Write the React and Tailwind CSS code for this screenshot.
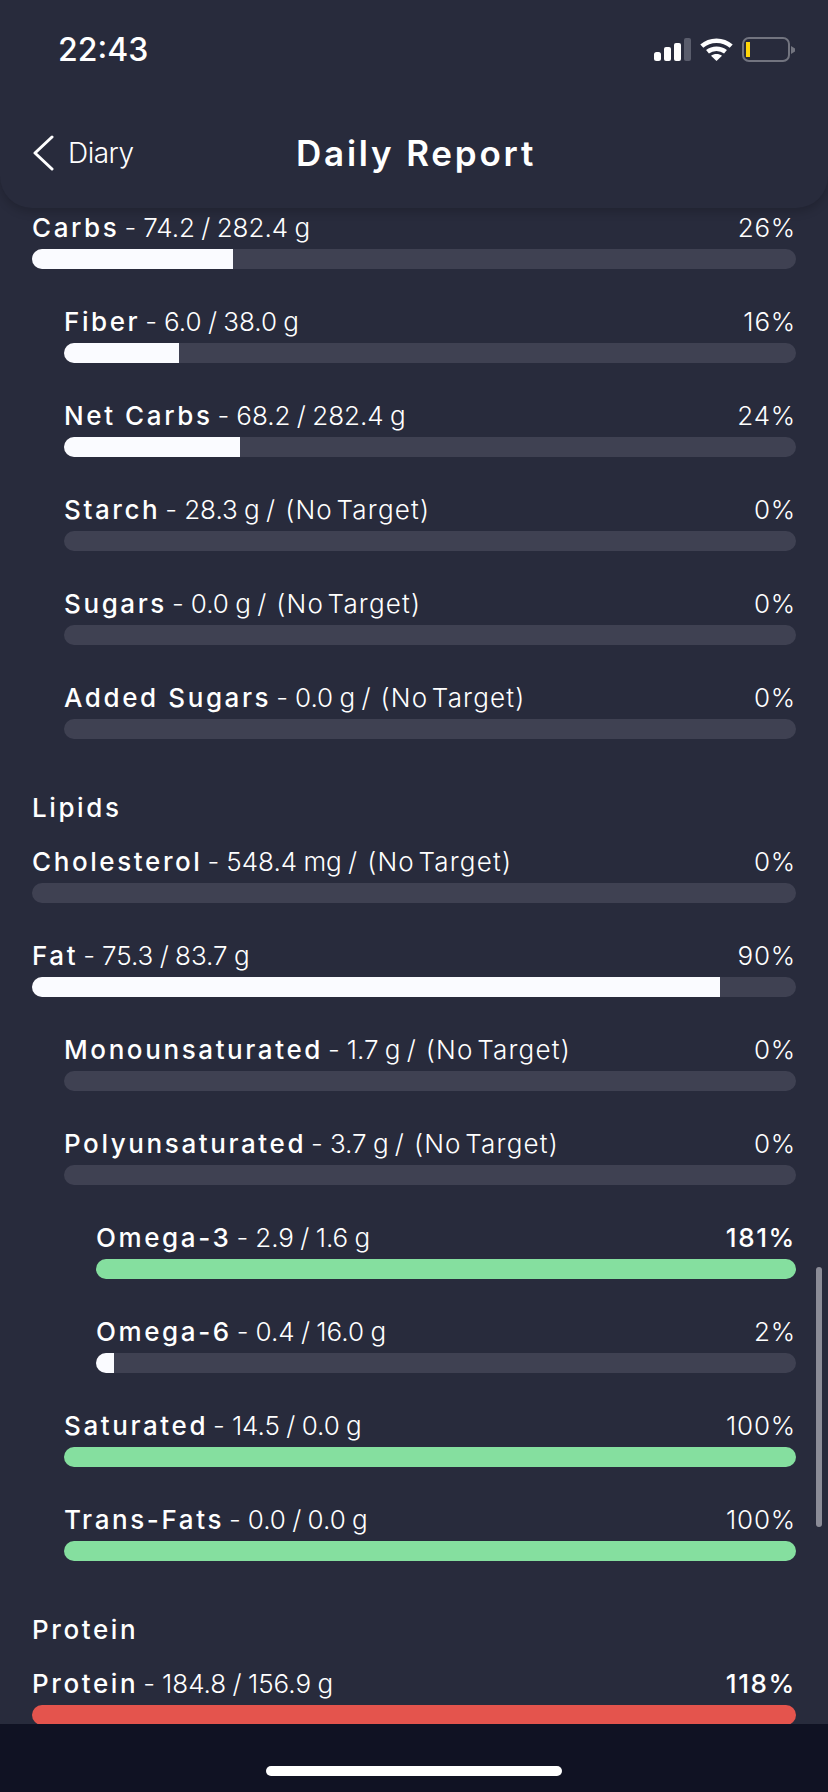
const FONT = "font-['Inter','Liberation_Sans',sans-serif]";

function StatusBar() {
  return (
    <div className="flex h-[88px] items-start justify-between pl-[58px] pr-[33px] pt-[30px]">
      <span className="text-[32px] leading-[40px] font-medium text-white">22:43</span>
      <div className="flex items-center gap-[9px] pt-[7px]">
        <svg width="37" height="23" viewBox="0 0 37 23">
          <rect x="0" y="14" width="7" height="9" rx="2.5" fill="#fff" />
          <rect x="10" y="9" width="7" height="14" rx="2" fill="#fff" />
          <rect x="20" y="5" width="7" height="18" rx="2" fill="#fff" />
          <rect x="30" y="0" width="7" height="23" rx="2" fill="#5a5d6c" />
        </svg>
        <svg width="33" height="23" viewBox="0 0 33 23" fill="none" stroke="#fff" strokeWidth="4.5">
          <path d="M1.8 8.2C10 0.8 23 0.8 31.2 8.2" />
          <path d="M7.5 13.8C12.6 9.6 20.4 9.6 25.5 13.8" />
          <path d="M16.5 23l-5.5-5.2c3-2.4 8-2.4 11 0z" fill="#fff" stroke="none" />
        </svg>
        <svg width="53" height="25" viewBox="0 0 53 25" fill="none">
          <rect x="1" y="1" width="46" height="23" rx="6" stroke="#72747f" strokeWidth="2" />
          <rect x="4" y="5" width="4" height="15" fill="#ffd60a" />
          <path d="M49 9l4 2.5v3L49 17z" fill="#72747f" />
        </svg>
      </div>
    </div>
  );
}

function Header() {
  return (
    <div className="relative z-10 h-[208px] shrink-0 rounded-b-[32px] bg-[#282b3c] shadow-[0_4px_10px_rgba(0,0,0,0.18)]">
      <StatusBar />
      <div className="grid h-[120px] grid-cols-[1fr_auto_1fr] items-center pt-[10px]">
        <div className="flex items-center gap-[12px] pl-[32px]">
          <svg width="24" height="36" viewBox="0 0 24 36" fill="none" stroke="#fff" strokeWidth="3" strokeLinecap="round" strokeLinejoin="round">
            <path d="M20 2L3 18l17 16" />
          </svg>
          <span className="text-[28px] leading-[36px] font-light tracking-[-0.5px] text-white">Diary</span>
        </div>
        <h1 className="ml-[4px] text-[35px] leading-[44px] font-semibold tracking-[2.8px] text-white">Daily Report</h1>
        <div />
      </div>
    </div>
  );
}

function Row({ name, detail, noTarget = false, pct, fill = 0, color = "bg-[#fafbff]", level = 0, bold = false }) {
  const pad = level === 0 ? "pl-[32px]" : level === 1 ? "pl-[64px]" : "pl-[96px]";
  return (
    <div className={`h-[94px] pr-[32px] ${pad}`}>
      <div className="mb-[2px] flex h-[39px] items-center justify-between text-[26px] leading-[32px] text-white">
        <div className="whitespace-nowrap">
          <span className="font-medium tracking-[2.6px]">{name}</span>
          <span className="ml-[5px] mr-[7px] font-light">-</span>
          <span className="font-light [word-spacing:-1px]">{detail}</span>
          {noTarget && (
            <span className="ml-[10px] font-light tracking-[1.2px] [word-spacing:-5px]">(No Target)</span>
          )}
        </div>
        <span className={bold ? "font-medium tracking-[1.6px]" : "font-light tracking-[0.8px]"}>{pct}</span>
      </div>
      <div className="h-[20px] overflow-hidden rounded-[10px] bg-[#3f4152]">
        <div className={`h-full ${color}`} style={{ width: `${fill}%` }} />
      </div>
    </div>
  );
}

function Heading({ children }) {
  return (
    <div className="mt-[20px] mb-[18px] pl-[32px] text-[26px] leading-[32px] font-medium tracking-[2.6px] text-white">
      {children}
    </div>
  );
}

export default function App() {
  return (
    <div className={`relative flex h-[1792px] w-[828px] flex-col overflow-hidden bg-[#282b3c] ${FONT}`}>
      <Header />
      <div className="relative min-h-0 flex-1 overflow-hidden">
        <Row name="Carbs" detail="74.2 / 282.4 g" pct="26%" fill={26.3} />
        <Row level={1} name="Fiber" detail="6.0 / 38.0 g" pct="16%" fill={15.7} />
        <Row level={1} name="Net Carbs" detail="68.2 / 282.4 g" pct="24%" fill={24} />
        <Row level={1} name="Starch" detail="28.3 g /" noTarget pct="0%" />
        <Row level={1} name="Sugars" detail="0.0 g /" noTarget pct="0%" />
        <Row level={1} name="Added Sugars" detail="0.0 g /" noTarget pct="0%" />
        <Heading>Lipids</Heading>
        <Row name="Cholesterol" detail="548.4 mg /" noTarget pct="0%" />
        <Row name="Fat" detail="75.3 / 83.7 g" pct="90%" fill={90} />
        <Row level={1} name="Monounsaturated" detail="1.7 g /" noTarget pct="0%" />
        <Row level={1} name="Polyunsaturated" detail="3.7 g /" noTarget pct="0%" />
        <Row level={2} name="Omega-3" detail="2.9 / 1.6 g" pct="181%" fill={100} color="bg-[#85df9f]" bold />
        <Row level={2} name="Omega-6" detail="0.4 / 16.0 g" pct="2%" fill={2.5} />
        <Row level={1} name="Saturated" detail="14.5 / 0.0 g" pct="100%" fill={100} color="bg-[#85df9f]" />
        <Row level={1} name="Trans-Fats" detail="0.0 / 0.0 g" pct="100%" fill={100} color="bg-[#85df9f]" />
        <Heading>Protein</Heading>
        <Row name="Protein" detail="184.8 / 156.9 g" pct="118%" fill={100} color="bg-[#e4544d]" bold />
        <div className="absolute right-[6px] top-[1059px] h-[260px] w-[6px] rounded-[3px] bg-[#8b8c97]" />
      </div>
      <div className="flex h-[68px] shrink-0 items-end justify-center bg-[#101223] pb-[16px]">
        <div className="h-[10px] w-[296px] rounded-[5px] bg-white" />
      </div>
    </div>
  );
}
